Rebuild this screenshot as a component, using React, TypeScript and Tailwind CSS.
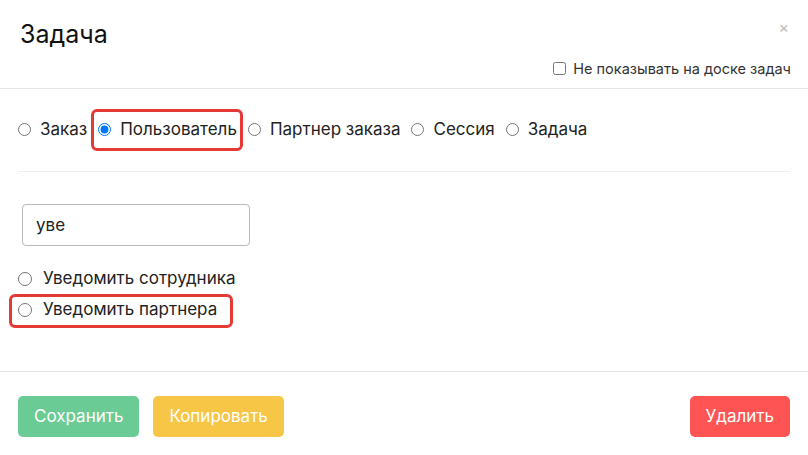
import React from 'react';

const types = ['Заказ', 'Пользователь', 'Партнер заказа', 'Сессия', 'Задача'];

export default function App() {
  return (
    <div className="w-[808px] h-[455px] bg-white text-[#222] flex flex-col" style={{ fontFamily: 'Inter, "Noto Sans", sans-serif' }}>
      {/* header */}
      <div className="relative px-5 pt-[18px] pb-[8px] border-b border-[#e5e5e5]">
        <h1 className="text-[25px] leading-[32px] font-normal text-[#111]">Задача</h1>
        <span className="absolute right-[19px] top-[15px] text-[16px] text-[#bbb]">×</span>
        <label className="mt-[8px] flex items-center justify-end gap-[7px] -mr-[3px] text-[14.5px] text-[#333]">
          <input type="checkbox" className="m-0 w-[13px] h-[13px]" />
          Не показывать на доске задач
        </label>
      </div>

      {/* body */}
      <div className="flex-1 px-[18px]">
        <div className="flex items-center h-[83px] border-b border-[#eee] text-[17px]">
          {types.map((t, i) => (
            <label key={t} className={`relative flex items-center gap-[9px] ${i === 0 ? '' : 'ml-[11px]'}`}>
              <input type="radio" name="type" defaultChecked={i === 1} className="m-0 w-[13px] h-[13px]" />
              <span>{t}</span>
              {i === 1 && (
                <span className="pointer-events-none absolute -left-[7px] -right-[6px] -top-[8px] -bottom-[8px] rounded-md border-[3px] border-[#e53935]" />
              )}
            </label>
          ))}
        </div>

        <div className="pt-[32px] pl-[4px]">
          <input
            defaultValue="уве"
            className="w-[228px] h-[42px] rounded-[4px] border border-[#b8b8bf] px-[13px] text-[17px] text-[#222] outline-none"
          />
        </div>

        <div className="mt-[20px] flex flex-col gap-[6px] text-[17px]">
          <label className="flex items-center gap-[11px]">
            <input type="radio" name="notify" className="m-0 w-[14px] h-[14px]" />
            Уведомить сотрудника
          </label>
          <label className="relative flex items-center gap-[11px] self-start">
            <input type="radio" name="notify" className="m-0 w-[14px] h-[14px]" />
            Уведомить партнера
            <span className="pointer-events-none absolute -left-[9px] -right-[16px] -top-[3px] -bottom-[5px] rounded-md border-[3px] border-[#e53935]" />
          </label>
        </div>
      </div>

      {/* footer */}
      <div className="h-[84px] border-t border-[#e5e5e5] px-[18px] pt-[24px] flex items-start gap-[14px] text-white text-[17px]">
        <button className="h-[41px] px-[16px] rounded-[5px] bg-[#6bcb95]">Сохранить</button>
        <button className="h-[41px] px-[16px] rounded-[5px] bg-[#f8c646]">Копировать</button>
        <button className="ml-auto h-[41px] px-[16px] rounded-[5px] bg-[#fe5454]">Удалить</button>
      </div>
    </div>
  );
}
